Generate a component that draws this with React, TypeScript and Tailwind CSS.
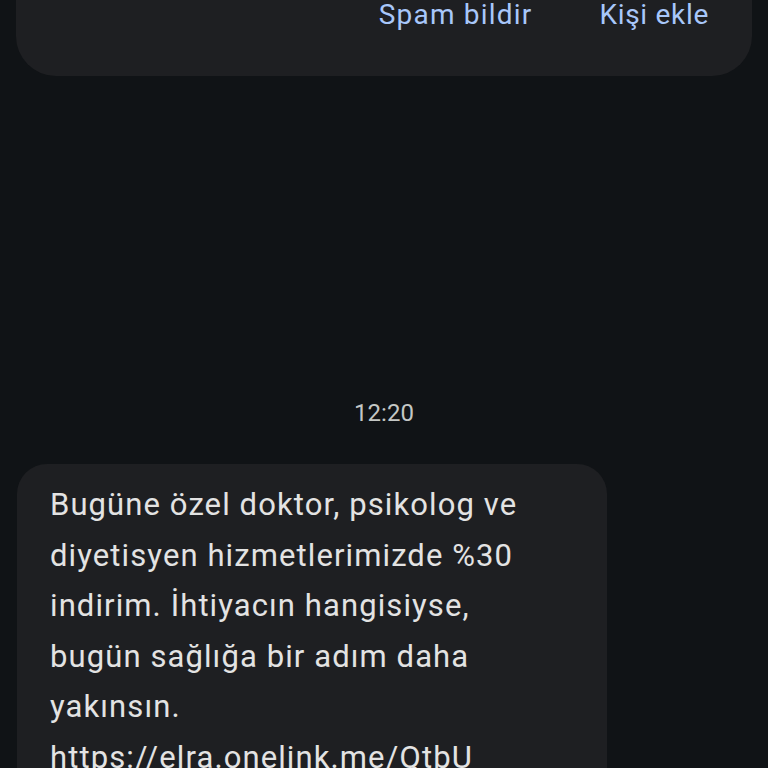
const lines = [
  "Bugüne özel doktor, psikolog ve",
  "diyetisyen hizmetlerimizde %30",
  "indirim. İhtiyacın hangisiyse,",
  "bugün sağlığa bir adım daha",
  "yakınsın.",
  "https://elra.onelink.me/QtbU",
];

export default function App() {
  return (
    <div
      className="h-[768px] overflow-hidden bg-[#101316]"
      style={{ fontFamily: "Roboto, 'Noto Sans', sans-serif" }}
    >
      <div className="mx-4 flex h-[76px] items-start justify-end gap-[67px] rounded-b-[40px] bg-[#1e1f22] pr-[43px] pt-[1px]">
        <button className="text-[28px] leading-[28px] tracking-[1.2px] text-[#a8c7fa]">Spam bildir</button>
        <button className="text-[28px] leading-[28px] tracking-[0.7px] text-[#a8c7fa]">Kişi ekle</button>
      </div>

      <div className="mt-[325px] text-center text-[24px] leading-[24px] text-[#c4c7c5]">12:20</div>

      <div className="ml-[17px] mt-[39px] w-[590px] rounded-[30px] bg-[#1e1f22] pb-4 pl-[33px] pr-6 pt-4">
        {lines.map((line) => (
          <p key={line} className="text-[31px] leading-[50.5px] tracking-[1.1px] text-[#e3e3e3]">
            {line}
          </p>
        ))}
      </div>
    </div>
  );
}
